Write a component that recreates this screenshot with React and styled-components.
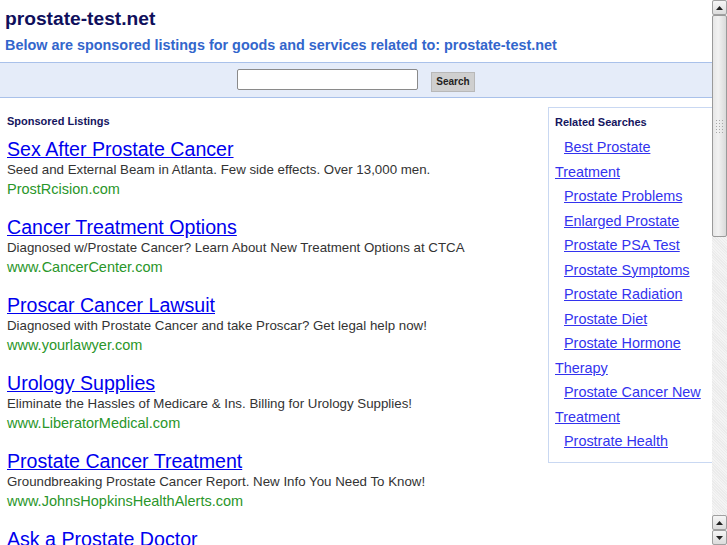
import React from 'react'
import styled, { createGlobalStyle } from 'styled-components'

const GlobalStyle = createGlobalStyle`
  html, body {
    margin: 0;
    padding: 0;
    background: #fff;
    overflow: hidden;
    font-family: "Liberation Sans", Arial, sans-serif;
  }
`

const Page = styled.div`
  width: 712px;
`

const Header = styled.div`
  padding: 8px 5px 0 5px;
  height: 62px;
  box-sizing: border-box;
`

const SiteTitle = styled.h1`
  margin: 0;
  font-size: 19.2px;
  line-height: 22px;
  font-weight: bold;
  color: #0f0f5c;
`

const SubTitle = styled.h2`
  margin: 7px 0 0 0;
  font-size: 14.4px;
  line-height: 17px;
  font-weight: bold;
  color: #3366cc;
`

const SearchBand = styled.form`
  height: 36px;
  box-sizing: border-box;
  background: #e5ecf9;
  border-top: 1px solid #a9c1ea;
  border-bottom: 1px solid #a9c1ea;
  display: flex;
  align-items: center;
  justify-content: center;
  gap: 13px;
`

const SearchInput = styled.input`
  width: 181px;
  height: 21px;
  box-sizing: border-box;
  border: 1px solid #8a8a8a;
  border-radius: 2px;
  background: #fff;
  margin: 0 0 2px 0;
`

const SearchButton = styled.button`
  width: 44px;
  height: 20px;
  margin-top: 3px;
  border: 1px solid #b8b8b8;
  background: #cfcfcf;
  font-family: "Liberation Sans", Arial, sans-serif;
  font-size: 10px;
  font-weight: bold;
  color: #222;
  padding: 0;
`

const Content = styled.div`
  display: flex;
  align-items: flex-start;
`

const Listings = styled.div`
  flex: 1;
  padding: 17px 0 0 7px;
`

const SectionLabel = styled.div`
  font-size: 11px;
  line-height: 13px;
  font-weight: bold;
  color: #15155e;
`

const Listing = styled.div`
  margin-top: ${p => (p.first ? '10px' : '17px')};
`

const ListingTitle = styled.a`
  display: block;
  font-size: 19.6px;
  line-height: 23px;
  color: #0000ee;
  text-decoration: underline;
`

const ListingDesc = styled.div`
  font-size: 13.3px;
  line-height: 18px;
  color: #333;
`

const ListingUrl = styled.div`
  font-size: 14.5px;
  line-height: 20px;
  color: #2a962a;
`

const Related = styled.div`
  width: 164px;
  box-sizing: border-box;
  margin-top: 9px;
  border: 1px solid #c9d8f2;
  border-right: none;
  padding: 8px 0 8px 6px;
`

const RelatedList = styled.div`
  margin-top: 6px;
`

const RelatedLink = styled.a`
  display: block;
  font-size: 14.4px;
  line-height: 24.5px;
  text-indent: 9px;
  color: #3333ee;
  text-decoration: underline;
`

const Scrollbar = styled.div`
  position: fixed;
  top: 0;
  right: 0;
  width: 15px;
  height: 100vh;
  display: flex;
  flex-direction: column;
  background: repeating-linear-gradient(45deg, #f4f4f4 0 1px, #ebebeb 1px 2px);
`

const ArrowButton = styled.div`
  width: 15px;
  height: 15px;
  box-sizing: border-box;
  border: 1px solid #a0a0a0;
  border-radius: 2px;
  background: linear-gradient(#f6f6f6, #dcdcdc);
  display: flex;
  align-items: center;
  justify-content: center;
`

const Thumb = styled.div`
  height: 222px;
  box-sizing: border-box;
  border: 1px solid #9a9a9a;
  border-radius: 2px;
  background: linear-gradient(90deg, #e6e6e6, #f2f2f2 40%, #dadada);
  display: flex;
  justify-content: center;
  padding-top: 104px;
`

const Track = styled.div`
  flex: 1;
`

const Arrow = ({ down }) => (
  <svg width="7" height="4" viewBox="0 0 7 4">
    <polygon points={down ? '0,0 7,0 3.5,4' : '0,4 7,4 3.5,0'} fill="#222" />
  </svg>
)

const Grip = () => (
  <svg width="8" height="14" viewBox="0 0 8 14">
    {[0, 1, 2, 3, 4].map(r =>
      [0, 1, 2].map(c => (
        <rect key={`${r}-${c}`} x={c * 3} y={r * 3} width="1" height="1" fill="#a8a8a8" />
      ))
    )}
  </svg>
)

const ads = [
  {
    title: 'Sex After Prostate Cancer',
    desc: 'Seed and External Beam in Atlanta. Few side effects. Over 13,000 men.',
    url: 'ProstRcision.com',
  },
  {
    title: 'Cancer Treatment Options',
    desc: 'Diagnosed w/Prostate Cancer? Learn About New Treatment Options at CTCA',
    url: 'www.CancerCenter.com',
  },
  {
    title: 'Proscar Cancer Lawsuit',
    desc: 'Diagnosed with Prostate Cancer and take Proscar? Get legal help now!',
    url: 'www.yourlawyer.com',
  },
  {
    title: 'Urology Supplies',
    desc: 'Eliminate the Hassles of Medicare & Ins. Billing for Urology Supplies!',
    url: 'www.LiberatorMedical.com',
  },
  {
    title: 'Prostate Cancer Treatment',
    desc: 'Groundbreaking Prostate Cancer Report. New Info You Need To Know!',
    url: 'www.JohnsHopkinsHealthAlerts.com',
  },
  {
    title: 'Ask a Prostate Doctor',
  },
]

const related = [
  'Best Prostate Treatment',
  'Prostate Problems',
  'Enlarged Prostate',
  'Prostate PSA Test',
  'Prostate Symptoms',
  'Prostate Radiation',
  'Prostate Diet',
  'Prostate Hormone Therapy',
  'Prostate Cancer New Treatment',
  'Prostrate Health',
]

const App = () => {
  return (
    <Page>
      <GlobalStyle />
      <Header>
        <SiteTitle>prostate-test.net</SiteTitle>
        <SubTitle>Below are sponsored listings for goods and services related to: prostate-test.net</SubTitle>
      </Header>
      <SearchBand onSubmit={e => e.preventDefault()}>
        <SearchInput type="text" />
        <SearchButton type="submit">Search</SearchButton>
      </SearchBand>
      <Content>
        <Listings>
          <SectionLabel>Sponsored Listings</SectionLabel>
          {ads.map((ad, i) => (
            <Listing key={ad.title} first={i === 0}>
              <ListingTitle href="#">{ad.title}</ListingTitle>
              {ad.desc && <ListingDesc>{ad.desc}</ListingDesc>}
              {ad.url && <ListingUrl>{ad.url}</ListingUrl>}
            </Listing>
          ))}
        </Listings>
        <Related>
          <SectionLabel>Related Searches</SectionLabel>
          <RelatedList>
            {related.map(r => (
              <RelatedLink key={r} href="#">{r}</RelatedLink>
            ))}
          </RelatedList>
        </Related>
      </Content>
      <Scrollbar>
        <ArrowButton><Arrow /></ArrowButton>
        <Thumb><Grip /></Thumb>
        <Track />
        <ArrowButton><Arrow /></ArrowButton>
        <ArrowButton><Arrow down /></ArrowButton>
      </Scrollbar>
    </Page>
  )
}

export default App
